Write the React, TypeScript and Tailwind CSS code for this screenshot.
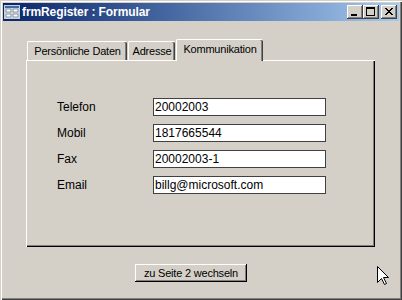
import React from "react";

const fields = [
  { label: "Telefon", value: "20002003" },
  { label: "Mobil", value: "1817665544" },
  { label: "Fax", value: "20002003-1" },
  { label: "Email", value: "billg@microsoft.com" },
];

const tabs = [
  { label: "Persönliche Daten", width: "w-[100px]", active: false },
  { label: "Adresse", width: "w-[47px]", active: false },
  { label: "Kommunikation", width: "w-[87px]", active: true },
];

function CaptionButton({ children, className = "" }: { children: React.ReactNode; className?: string }) {
  return (
    <div
      className={`flex h-[14px] w-[16px] items-center justify-center bg-[#d4d0c8] shadow-[inset_-1px_-1px_0_#404040,inset_1px_1px_0_#fff,inset_-2px_-2px_0_#808080] ${className}`}
    >
      {children}
    </div>
  );
}

export default function App() {
  return (
    <div
      className="relative h-[300px] w-[402px] bg-[#d4d0c8] p-[3px] shadow-[inset_1px_1px_0_#d4d0c8,inset_2px_2px_0_#fff,inset_-1px_-1px_0_#404040,inset_-2px_-2px_0_#808080]"
      style={{ fontFamily: '"Liberation Sans", Arial, sans-serif' }}
    >
      {/* title bar */}
      <div className="flex h-[18px] items-center bg-linear-to-r from-[#0a246a] to-[#a6caf0]">
        <svg width="16" height="14" viewBox="0 0 16 14" className="ml-[1px]">
          <rect x="0.5" y="0.5" width="15" height="13" fill="#dfe6f0" stroke="#c8d0dc" />
          <rect x="1" y="1" width="14" height="2" fill="#3a6ea5" />
          <rect x="2" y="4" width="5" height="3" fill="#fff" stroke="#6c7a8c" strokeWidth="0.8" />
          <rect x="9" y="4" width="5" height="3" fill="#fff" stroke="#6c7a8c" strokeWidth="0.8" />
          <rect x="2" y="9" width="5" height="3" fill="#fff" stroke="#6c7a8c" strokeWidth="0.8" />
          <rect x="9" y="9" width="5" height="3" fill="#fff" stroke="#6c7a8c" strokeWidth="0.8" />
        </svg>
        <span className="ml-[2px] text-[12px] font-bold leading-none tracking-[-0.1px] text-white">frmRegister : Formular</span>
        <div className="ml-auto mr-[2px] flex items-center">
          <CaptionButton>
            <svg width="16" height="14" viewBox="0 0 16 14">
              <rect x="4" y="9" width="6" height="2" fill="#000" />
            </svg>
          </CaptionButton>
          <CaptionButton>
            <svg width="16" height="14" viewBox="0 0 16 14">
              <rect x="3.5" y="2.5" width="8" height="8" fill="none" stroke="#000" />
              <rect x="3" y="2" width="9" height="2" fill="#000" />
            </svg>
          </CaptionButton>
          <CaptionButton className="ml-[2px]">
            <svg width="16" height="14" viewBox="0 0 16 14">
              <path d="M4 3 L11 10 M5 3 L12 10 M11 3 L4 10 M12 3 L5 10" stroke="#000" strokeWidth="1" />
            </svg>
          </CaptionButton>
        </div>
      </div>

      {/* tab control */}
      <div className="pt-[18px]">
        <div className="flex h-[21px] items-end gap-[1px] pl-[24px]">
          {tabs.map((t) => (
            <div
              key={t.label}
              className={`${t.width} relative flex items-center justify-center rounded-t-[2px] border-l border-t border-white bg-[#d4d0c8] text-[11px] tracking-[-0.2px] text-black shadow-[inset_-1px_0_0_#404040,inset_-2px_0_0_#808080] ${
                t.active ? "z-10 -mb-px h-[22px] pb-[3px]" : "h-[19px] pt-[1px]"
              }`}
            >
              {t.label}
            </div>
          ))}
        </div>
        <div className="ml-[23px] flex h-[187px] w-[349px] flex-col gap-[8px] border-l border-t border-white pl-[30px] pt-[37px] shadow-[inset_-1px_-1px_0_#000,inset_-2px_-2px_0_#808080]">
          {fields.map((f) => (
            <div key={f.label} className="flex h-[18px] items-center">
              <span className="w-[96px] text-[12px] text-black">{f.label}</span>
              <div className="flex h-[18px] w-[173px] items-center border border-[#404040] bg-white pl-[1px] text-[12px] text-black">
                {f.value}
              </div>
            </div>
          ))}
        </div>
        <div className="mt-[17px] pl-[132px]">
          <button className="flex h-[18px] w-[112px] items-center justify-center bg-[#d4d0c8] text-[11px] tracking-[-0.2px] text-black shadow-[inset_-1px_-1px_0_#000,inset_1px_1px_0_#fff,inset_-2px_-2px_0_#808080]">
            zu Seite 2 wechseln
          </button>
        </div>
      </div>

      {/* mouse pointer */}
      <svg width="13" height="21" viewBox="0 0 13 21" className="absolute left-[376px] top-[265px]">
        <path
          d="M1.5 1.5 L1.5 17.5 L5.5 13.5 L8.5 19.5 L10.5 18.5 L7.5 12.5 L12.5 12.5 Z"
          fill="#fff"
          stroke="#000"
          strokeWidth="1"
        />
      </svg>
    </div>
  );
}
